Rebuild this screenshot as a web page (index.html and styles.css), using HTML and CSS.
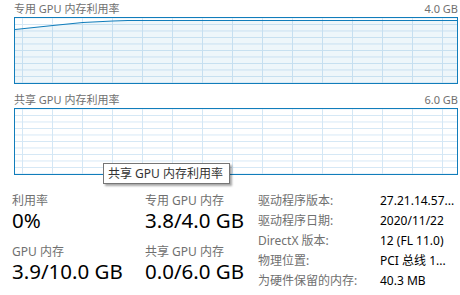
FILE: index.html
```html
<!DOCTYPE html>
<html lang="zh-CN">

<head>
  <meta charset="UTF-8" />
  <title>GPU</title>
  <link rel="stylesheet" href="styles.css">
</head>

<body>
  <div class="page">
    <div class="chart-head">
      <span>专用 GPU 内存利用率</span>
      <span>4.0 GB</span>
    </div>
    <div class="chart">
      <svg class="plot" viewBox="0 0 443 65" preserveAspectRatio="none">
        <polygon class="fill" points="0,11.5 38,7.5 68,4.5 98,3 113,2.5 443,2.5 443,65 0,65" />
        <polyline class="line" points="0,11.5 38,7.5 68,4.5 98,3 113,2.5 443,2.5" />
      </svg>
    </div>

    <div class="chart-head">
      <span>共享 GPU 内存利用率</span>
      <span>6.0 GB</span>
    </div>
    <div class="chart"></div>

    <div class="stats">
      <div class="stat-col">
        <div class="stat">
          <div class="label">利用率</div>
          <div class="value">0%</div>
        </div>
        <div class="stat">
          <div class="label">GPU 内存</div>
          <div class="value">3.9/10.0 GB</div>
        </div>
      </div>
      <div class="stat-col">
        <div class="stat">
          <div class="label">专用 GPU 内存</div>
          <div class="value">3.8/4.0 GB</div>
        </div>
        <div class="stat">
          <div class="label">共享 GPU 内存</div>
          <div class="value">0.0/6.0 GB</div>
        </div>
      </div>
      <div class="info">
        <span class="key">驱动程序版本:</span><span>27.21.14.57...</span>
        <span class="key">驱动程序日期:</span><span>2020/11/22</span>
        <span class="key">DirectX 版本:</span><span>12 (FL 11.0)</span>
        <span class="key">物理位置:</span><span>PCI 总线 1...</span>
        <span class="key">为硬件保留的内存:</span><span>40.3 MB</span>
      </div>
    </div>

    <div class="tooltip">共享 GPU 内存利用率</div>
  </div>
</body>

</html>
```

FILE: styles.css
```css
* {
  box-sizing: border-box;
  margin: 0;
  padding: 0;
}

body {
  font-family: "Noto Sans", "Noto Sans CJK SC", sans-serif;
  background: #fff;
  color: #000;
  width: 460px;
  height: 295px;
  overflow: hidden;
}

.page {
  position: relative;
  padding: 0 2px 0 14px;
}

.chart-head {
  display: flex;
  justify-content: space-between;
  color: #707070;
  font-size: 11px;
  line-height: 17px;
}

.chart {
  position: relative;
  height: 67px;
  border: 1px solid #117dbb;
  margin-bottom: 7px;
  background-color: #fff;
  background-image:
    linear-gradient(to right, #d4e7f5 1px, transparent 1px),
    linear-gradient(to bottom, #d4e7f5 1px, transparent 1px);
  background-size: 30px 100%, 100% 6.5px;
  background-position: 7px 0, 0 6px;
}

.plot {
  position: absolute;
  inset: 0;
  width: 100%;
  height: 100%;
}

.plot .fill {
  fill: rgba(17, 125, 187, 0.07);
}

.plot .line {
  fill: none;
  stroke: #117dbb;
  stroke-width: 1.2;
}

.stats {
  display: flex;
  margin-left: -2px;
  padding-top: 10px;
}

.stat-col {
  width: 133px;
  display: flex;
  flex-direction: column;
  gap: 11px;
}

.stat .label {
  color: #707070;
  font-size: 12px;
  line-height: 17px;
}

.stat .value {
  font-size: 20.5px;
  line-height: 23px;
}

.info {
  display: grid;
  grid-template-columns: 122px auto;
  margin-left: -20px;
  margin-top: -1px;
  font-size: 12px;
  line-height: 20px;
}

.info .key {
  color: #707070;
}

.tooltip {
  position: absolute;
  left: 103px;
  top: 163px;
  padding: 0 6px 0 4px;
  height: 21px;
  line-height: 19px;
  font-size: 12px;
  color: #333;
  background: #fff;
  border: 1px solid #767676;
  box-shadow: 2px 2px 2px rgba(0, 0, 0, 0.35);
}
```
